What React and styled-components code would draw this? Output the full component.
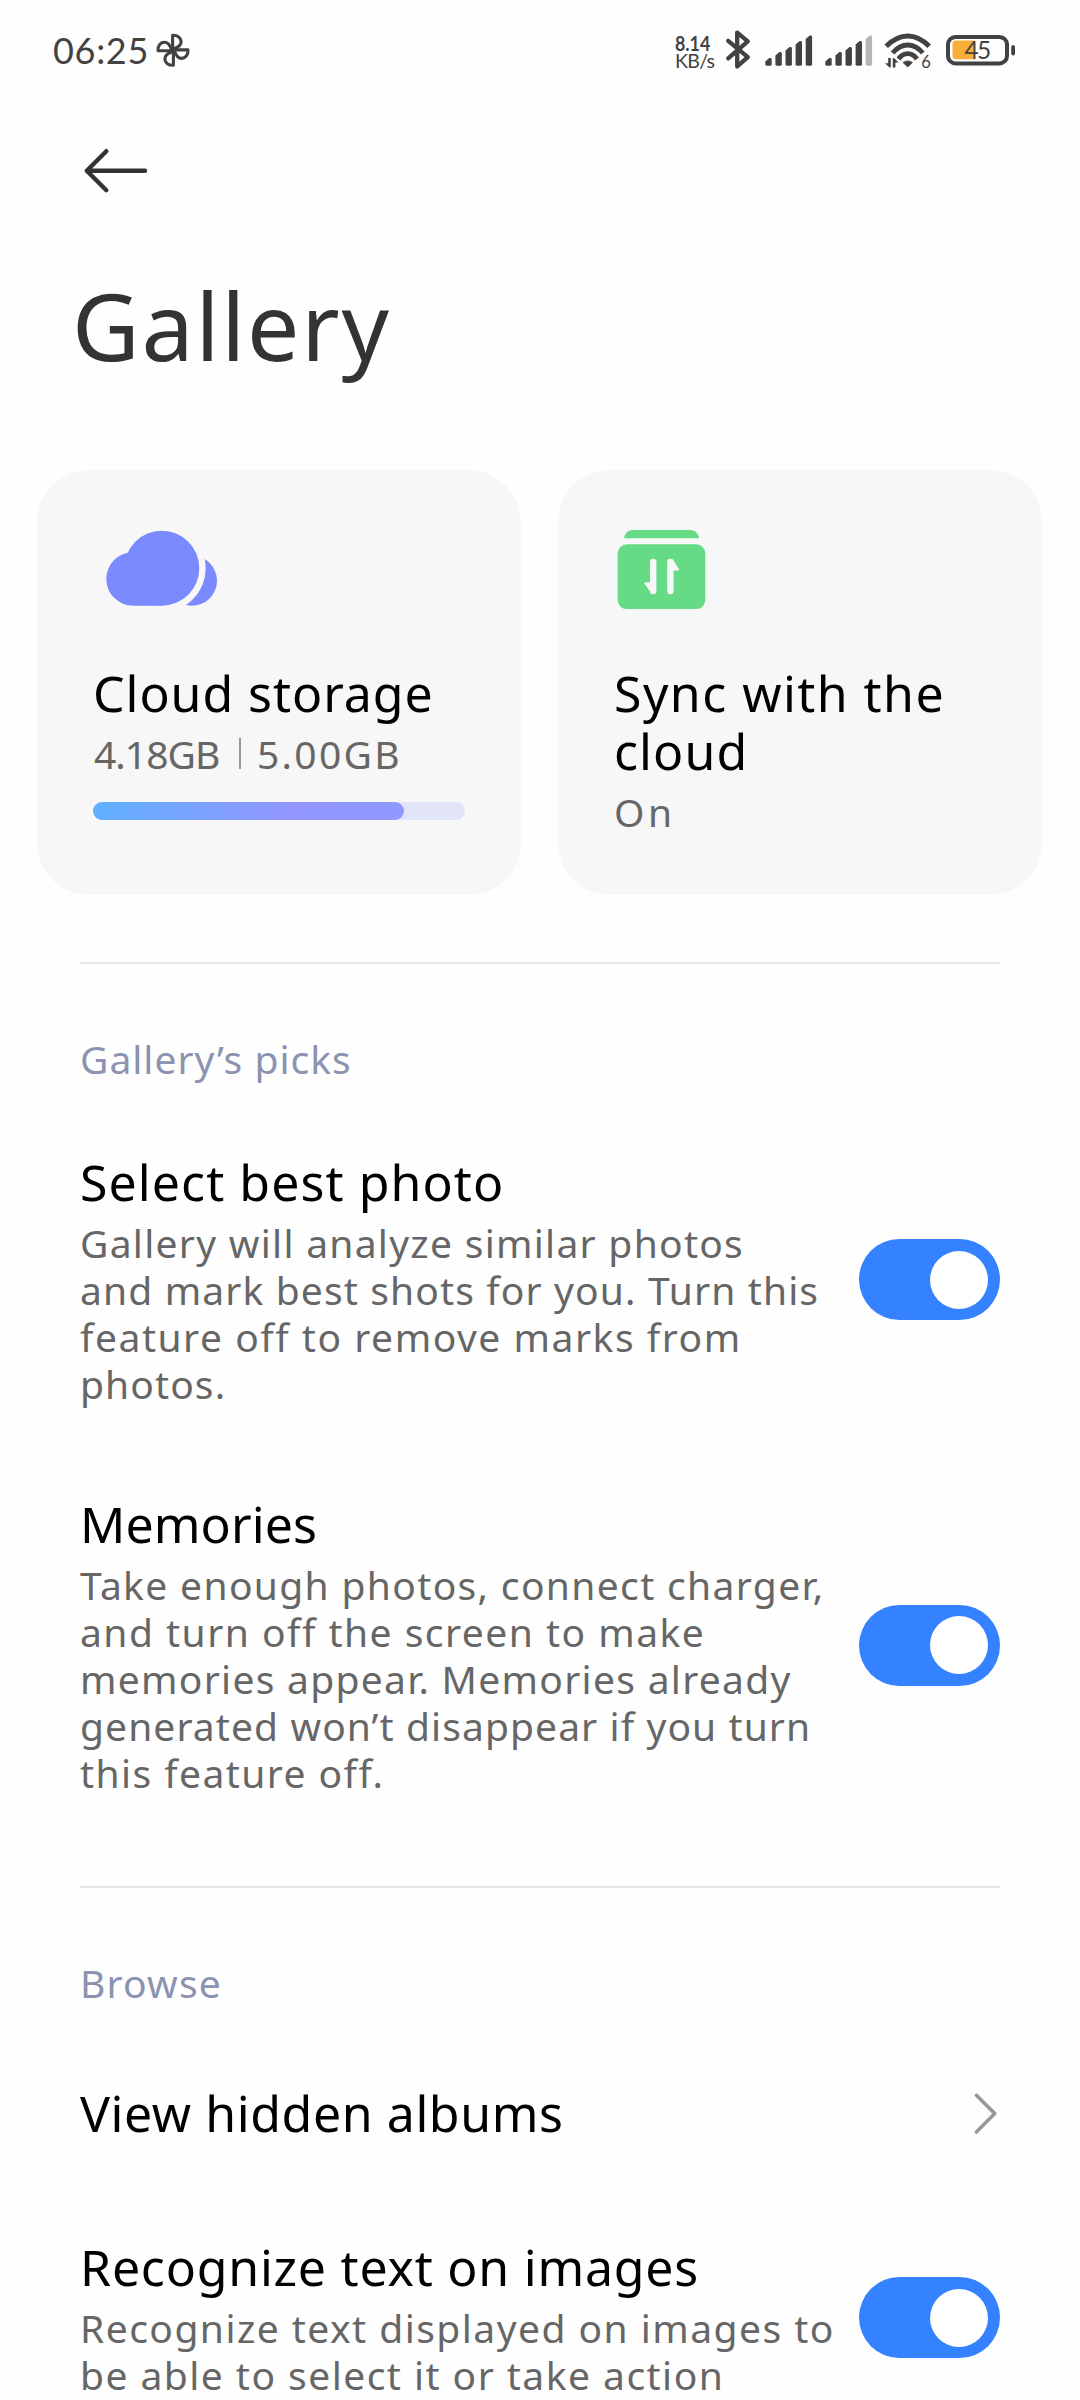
import React from "react";
import styled, { createGlobalStyle } from "styled-components";

const GlobalStyle = createGlobalStyle`
  * { box-sizing: border-box; }
  body { margin: 0; background: #fefefe; }
`;

const Screen = styled.div`
  width: 1080px;
  height: 2400px;
  overflow: hidden;
  display: flex;
  flex-direction: column;
  background: #fefefe;
  color: #000;
  font-family: "Noto Sans", "Open Sans", sans-serif;
  font-variant-ligatures: none;
`;

const StatusBar = styled.header`
  flex: none;
  display: flex;
  align-items: flex-start;
  height: 100px;
  padding: 28px 64px 0 53px;
  font-family: Lato, sans-serif;
  color: #424242;
`;

const Clock = styled.div`
  width: 103px;
  font-size: 36px;
  line-height: 44px;
  letter-spacing: 0.7px;
`;

const StatusIcons = styled.div`
  display: flex;
  align-items: flex-start;
  margin-left: auto;
`;

const NetSpeed = styled.div`
  display: flex;
  flex-direction: column;
  align-items: flex-start;
  width: 50px;
  padding-top: 6px;
  line-height: 18px;
  white-space: nowrap;
`;

const SpeedValue = styled.span`
  font-size: 21px;
  font-weight: 700;
  transform: scaleX(0.85);
  transform-origin: left center;
`;

const SpeedUnit = styled.span`
  font-size: 19.5px;
  letter-spacing: -0.7px;
`;

const StatusIcon = styled.svg`
  display: block;
  flex: none;
  height: 44px;
  width: ${(p) => p.$w}px;
  margin-left: ${(p) => p.$ml || 0}px;
`;

const IconText = styled.text`
  font-family: Lato, sans-serif;
  font-size: ${(p) => p.$size}px;
  letter-spacing: ${(p) => p.$ls || 0}px;
  fill: #424242;
`;

const BackButton = styled.button`
  flex: none;
  display: block;
  width: 66px;
  height: 46px;
  margin: 48px 0 0 83px;
  padding: 0;
  border: 0;
  background: none;

  svg { display: block; }
`;

const PageTitle = styled.h1`
  flex: none;
  margin: 74.5px 0 0 72px;
  font-size: 93px;
  font-weight: 400;
  line-height: 112px;
  letter-spacing: 1.8px;
  color: #333;
`;

const Cards = styled.div`
  flex: none;
  display: grid;
  grid-template-columns: 484px 484px;
  gap: 37px;
  height: 425px;
  margin: 89.5px 0 0 37px;
`;

const Card = styled.section`
  padding: 56px;
  border-radius: 52px;
  background: #f7f7f7;
`;

const CardIcon = styled.svg`
  display: block;
  width: 130px;
  height: 90px;
  margin-bottom: 48.2px;
`;

const Title = styled.div`
  font-size: 50px;
  line-height: 58px;
  white-space: nowrap;
`;

const Summary = styled.div`
  margin-top: 8.2px;
  font-size: 39px;
  line-height: 47px;
  white-space: nowrap;
  color: #666;
`;

const Line = styled.span`
  display: block;
  letter-spacing: ${(p) => p.$ls}px;
`;

const Usage = styled(Summary)`
  display: flex;
`;

const UsedAmount = styled.span`
  width: 145px;
  margin-left: 1px;
  letter-spacing: -0.95px;
`;

const UsageDivider = styled.span`
  width: 2px;
  height: 31px;
  margin: 8px 16px 0 0;
  background: #999;
`;

const TotalAmount = styled.span`
  letter-spacing: 2.3px;
`;

const Track = styled.div`
  height: 18px;
  width: 372px;
  margin-top: 24.6px;
  border-radius: 9px;
  background: #e2e5f9;
`;

const Fill = styled.div`
  height: 18px;
  width: 311px;
  border-radius: 9px;
  background: linear-gradient(105deg, #60b1ff 0%, #9197ff 62%, #9199ff 100%);
`;

const Divider = styled.hr`
  flex: none;
  width: 920px;
  height: 2px;
  margin: ${(p) => p.$top}px 0 0 80px;
  border: 0;
  background: #e5e5e5;
`;

const SectionLabel = styled.h2`
  flex: none;
  margin: 70.6px 0 ${(p) => p.$bottom}px 80px;
  font-size: 39px;
  font-weight: 400;
  line-height: 47px;
  letter-spacing: ${(p) => p.$ls}px;
  color: #8c93b0;
`;

const Setting = styled.div`
  flex: none;
  display: flex;
  align-items: center;
  justify-content: space-between;
  margin: 0 80px ${(p) => p.$gap || 0}px;
`;

const Toggle = styled.div`
  flex: none;
  display: flex;
  align-items: center;
  justify-content: flex-end;
  width: 141px;
  height: 81px;
  padding-right: 12px;
  border-radius: 41px;
  background: #3482ff;
`;

const Knob = styled.div`
  width: 58px;
  height: 58px;
  border-radius: 50%;
  background: #fff;
`;

const Chevron = styled.svg`
  display: block;
  width: 28px;
  height: 44px;
`;

const BAR_TOPS = [30, 24, 19, 13, 7.5];

function Signal({ ml, faded }) {
  return (
    <StatusIcon $w={48} $ml={ml} viewBox="0 0 48 44">
      {BAR_TOPS.map((top, i) => {
        const x = i * 10.1 + 0.3;
        return (
          <path
            key={top}
            d={`M${x} ${top + 3.6} L${x + 4} ${top} H${x + 5} Q${x + 6.4} ${top} ${x + 6.4} ${top + 1.4} V36.3 Q${x + 6.4} 37.7 ${x + 5} 37.7 H${x + 1.4} Q${x} 37.7 ${x} 36.3 Z`}
            fill={faded && i === 4 ? "#b6b6b6" : "#424242"}
          />
        );
      })}
    </StatusIcon>
  );
}

function ToggleSetting({ title, titleLs, lines, gap }) {
  return (
    <Setting $gap={gap}>
      <div>
        <Title><Line $ls={titleLs}>{title}</Line></Title>
        <Summary>
          {lines.map(([text, ls]) => <Line key={text} $ls={ls}>{text}</Line>)}
        </Summary>
      </div>
      <Toggle role="switch" aria-checked="true"><Knob /></Toggle>
    </Setting>
  );
}

export default function App() {
  return (
    <>
      <GlobalStyle />
      <Screen>
        <StatusBar>
          <Clock>06:25</Clock>
          <StatusIcon $w={34} viewBox="0 0 34 44" fill="none" stroke="#424242" strokeWidth="3.1" strokeLinejoin="round" strokeLinecap="round">
            {[0, 90, 180, 270].map((a) => (
              <path key={a} transform={`rotate(${a} 17 22.3)`} d="M16.6 21.6 V7.3 C21.5 7 25 9.8 25.1 13.4 C25.2 17 22 19.4 18.2 20.6" />
            ))}
          </StatusIcon>
          <StatusIcons>
            <NetSpeed>
              <SpeedValue>8.14</SpeedValue>
              <SpeedUnit>KB/s</SpeedUnit>
            </NetSpeed>
            <StatusIcon $w={27} viewBox="0 0 27 44">
              <path d="M3.2 12.9 L22.8 29.2 L12.2 38.4 V4.6 L22.8 13.3 L3.2 30.3" fill="none" stroke="#424242" strokeWidth="4.3" strokeLinejoin="round" strokeLinecap="round" />
            </StatusIcon>
            <Signal ml={12.5} />
            <Signal ml={12} faded />
            <StatusIcon $w={50} $ml={11.5} viewBox="0 0 50 44">
              <g fill="none" stroke="#424242" strokeWidth="4.9">
                <path d="M2.2 18.3 Q12.5 8 23.7 8 Q35 8 45.2 18.3" />
                <path d="M8.6 25 Q15.5 17 23.7 17 Q32 17 38.8 25" />
                <path d="M14.5 31 Q18.5 25.6 23.7 25.6 Q29 25.6 33 31" />
              </g>
              <path d="M19 34.5 Q23.7 31.4 28.4 34.5 L23.7 39 Z" fill="#424242" stroke="#424242" strokeWidth="0.8" strokeLinejoin="round" />
              <path d="M6.8 30 V39.6 H5.6 L1 35.2 H4.2 V30 Z M8.8 39.6 V30 H10 L14.6 34.4 H11.4 V39.6 Z" fill="#424242" />
              <IconText $size={16.5} x="37.2" y="39.6">6</IconText>
            </StatusIcon>
            <StatusIcon $w={70} $ml={12} viewBox="0 0 70 44">
              <rect x="2" y="9" width="59" height="26.4" rx="7.5" fill="none" stroke="#424242" strokeWidth="4" />
              <path d="M10 12.6 H29 V31.3 H10 Q6.5 31.3 6.5 27.8 V16.1 Q6.5 12.6 10 12.6 Z" fill="#f6ae39" />
              <rect x="65.2" y="17" width="3.8" height="10.4" rx="1.9" fill="#424242" />
              <IconText $size={24.5} $ls={-1.8} x="18.6" y="31">45</IconText>
            </StatusIcon>
          </StatusIcons>
        </StatusBar>

        <BackButton aria-label="Back">
          <svg width="66" height="46" viewBox="0 0 66 46" fill="none" stroke="#333" strokeWidth="4.4" strokeLinecap="round" strokeLinejoin="round">
            <path d="M23.3 3.2 L3.8 22.7 L23.3 42.2 M3.8 22.7 H62" />
          </svg>
        </BackButton>

        <PageTitle>Gallery</PageTitle>

        <Cards>
          <Card>
            <CardIcon viewBox="0 0 130 90">
              <circle cx="99" cy="54.7" r="25" fill="#7b8aff" />
              <circle cx="68.8" cy="42.2" r="43.9" fill="#f7f7f7" />
              <circle cx="68.8" cy="42.2" r="37.5" fill="#7b8aff" />
              <path d="M40 26.2 A26.75 26.75 0 0 0 40 79.7 H68.8 V26.2 Z" fill="#7b8aff" />
            </CardIcon>
            <Title><Line $ls={0.95}>Cloud storage</Line></Title>
            <Usage>
              <UsedAmount>4.18GB</UsedAmount>
              <UsageDivider />
              <TotalAmount>5.00GB</TotalAmount>
            </Usage>
            <Track><Fill /></Track>
          </Card>
          <Card>
            <CardIcon viewBox="0 0 130 90">
              <path d="M10 12.3 Q11.5 4 19 4 H76 Q83.5 4 85 12.3 Z" fill="#65db86" />
              <rect x="3.7" y="18.3" width="87.6" height="64.8" rx="9" fill="#65db86" />
              <path d="M39.2 35.9 V65 M56.4 35.9 V65" fill="none" stroke="#f7f7f7" strokeWidth="6.4" strokeLinecap="round" />
              <path d="M30.5 56.9 L37.5 66.8 L41 62 V56.9 Z M65 44 L58.5 33.6 L55 38 V44 Z" fill="#f7f7f7" stroke="#f7f7f7" strokeWidth="1" strokeLinejoin="round" />
            </CardIcon>
            <Title>
              <Line $ls={1.46}>Sync with the</Line>
              <Line $ls={1.1}>cloud</Line>
            </Title>
            <Summary><Line $ls={3.6}>On</Line></Summary>
          </Card>
        </Cards>

        <Divider $top={67} />
        <SectionLabel $ls={1} $bottom={71}>Gallery’s picks</SectionLabel>
        <ToggleSetting
          title="Select best photo"
          titleLs={1.08}
          gap={87.8}
          lines={[
            ["Gallery will analyze similar photos", 1.28],
            ["and mark best shots for you. Turn this", 1.13],
            ["feature off to remove marks from", 1.53],
            ["photos.", 1.1],
          ]}
        />
        <ToggleSetting
          title="Memories"
          titleLs={0.1}
          lines={[
            ["Take enough photos, connect charger,", 1.34],
            ["and turn off the screen to make", 1.48],
            ["memories appear. Memories already", 1.29],
            ["generated won’t disappear if you turn", 1.09],
            ["this feature off.", 1.43],
          ]}
        />

        <Divider $top={90.4} />
        <SectionLabel $ls={1.2} $bottom={77.8}>Browse</SectionLabel>
        <Setting $gap={96}>
          <Title><Line $ls={0.58}>View hidden albums</Line></Title>
          <Chevron viewBox="0 0 28 44" fill="none" stroke="#999" strokeWidth="3.6" strokeLinecap="round" strokeLinejoin="round">
            <path d="M4.4 4.3 L22.8 22.6 L4.4 41" />
          </Chevron>
        </Setting>
        <ToggleSetting
          title="Recognize text on images"
          titleLs={0.78}
          lines={[
            ["Recognize text displayed on images to", 1.46],
            ["be able to select it or take action", 1.46],
          ]}
        />
      </Screen>
    </>
  );
}
